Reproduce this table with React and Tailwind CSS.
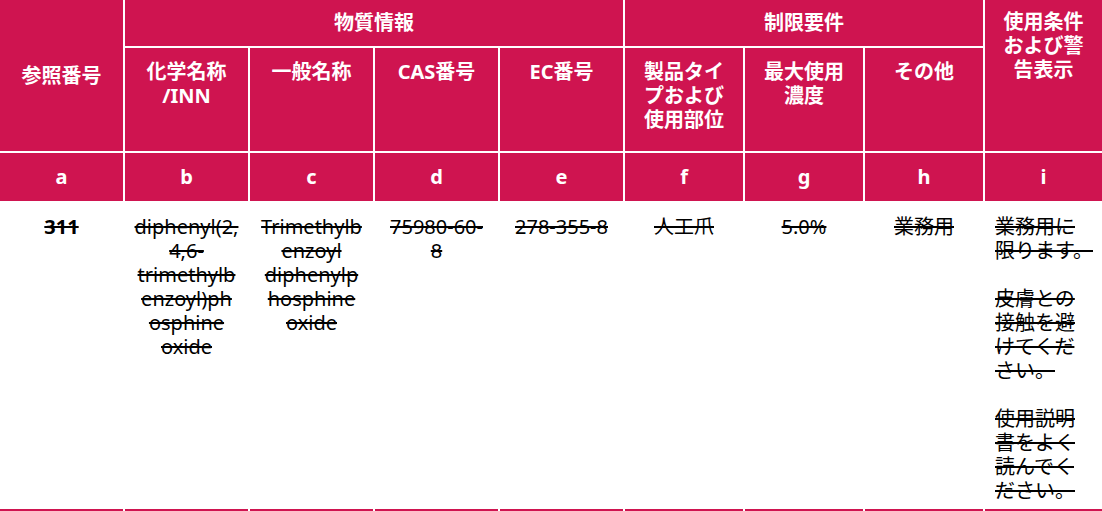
import React from "react";

const H = "bg-[#cf1450] text-white font-bold text-[20px] leading-[24px]";
const B = "bg-white border-b-2 border-[#cf1450] pt-[12px] text-black text-[20px] leading-[24px] line-through decoration-black";

function Lines({ lines }) {
  return lines.map((l, i) => (
    <div key={i} className="whitespace-nowrap">
      {l === "" ? "\u00a0" : l}
    </div>
  ));
}

export default function App() {
  return (
    <div className="w-[1102px] h-[511px] overflow-hidden bg-white font-['Noto_Sans','Noto_Sans_CJK_JP',sans-serif]">
      <div className="grid grid-cols-[123px_123px_123px_123px_123px_118px_118px_118px_117px] grid-rows-[46px_103px_48px_308px] gap-[2px] bg-white">
        {/* row 1 */}
        <div className={`${H} row-span-2 flex items-center justify-center`}>参照番号</div>
        <div className={`${H} col-span-4 flex items-center justify-center`}>物質情報</div>
        <div className={`${H} col-span-3 flex items-center justify-center`}>制限要件</div>
        <div className={`${H} row-span-2 pt-[10px] text-center`}>
          <Lines lines={["使用条件", "および警", "告表示"]} />
        </div>
        {/* row 2 */}
        <div className={`${H} pt-[12px] text-center`}>
          <Lines lines={["化学名称", "/INN"]} />
        </div>
        <div className={`${H} pt-[12px] text-center`}>一般名称</div>
        <div className={`${H} pt-[12px] text-center`}>CAS番号</div>
        <div className={`${H} pt-[12px] text-center`}>EC番号</div>
        <div className={`${H} pt-[12px] text-center`}>
          <Lines lines={["製品タイ", "プおよび", "使用部位"]} />
        </div>
        <div className={`${H} pt-[12px] text-center`}>
          <Lines lines={["最大使用", "濃度"]} />
        </div>
        <div className={`${H} pt-[12px] text-center`}>その他</div>
        {/* row 3 */}
        {["a", "b", "c", "d", "e", "f", "g", "h", "i"].map((c) => (
          <div key={c} className={`${H} flex items-center justify-center`}>{c}</div>
        ))}
        {/* body */}
        <div className={`${B} text-center font-bold`}>311</div>
        <div className={`${B} text-center`}>
          <Lines lines={["diphenyl(2,", "4,6-", "trimethylb", "enzoyl)ph", "osphine", "oxide"]} />
        </div>
        <div className={`${B} text-center`}>
          <Lines lines={["Trimethylb", "enzoyl", "diphenylp", "hosphine", "oxide"]} />
        </div>
        <div className={`${B} text-center`}>
          <Lines lines={["75980-60-", "8"]} />
        </div>
        <div className={`${B} text-center`}>278-355-8</div>
        <div className={`${B} text-center`}>人工爪</div>
        <div className={`${B} text-center`}>5.0%</div>
        <div className={`${B} text-center`}>業務用</div>
        <div className={`${B} pl-[10px] text-left`}>
          <div className="whitespace-nowrap">業務用に</div>
          <div className="whitespace-nowrap">限ります。</div>
          <div className="mt-[24px] whitespace-nowrap">皮膚との</div>
          <div className="whitespace-nowrap">接触を避</div>
          <div className="whitespace-nowrap">けてくだ</div>
          <div className="whitespace-nowrap">さい。</div>
          <div className="mt-[24px] whitespace-nowrap">使用説明</div>
          <div className="whitespace-nowrap">書をよく</div>
          <div className="whitespace-nowrap">読んでく</div>
          <div className="whitespace-nowrap">ださい。</div>
        </div>
      </div>
    </div>
  );
}
